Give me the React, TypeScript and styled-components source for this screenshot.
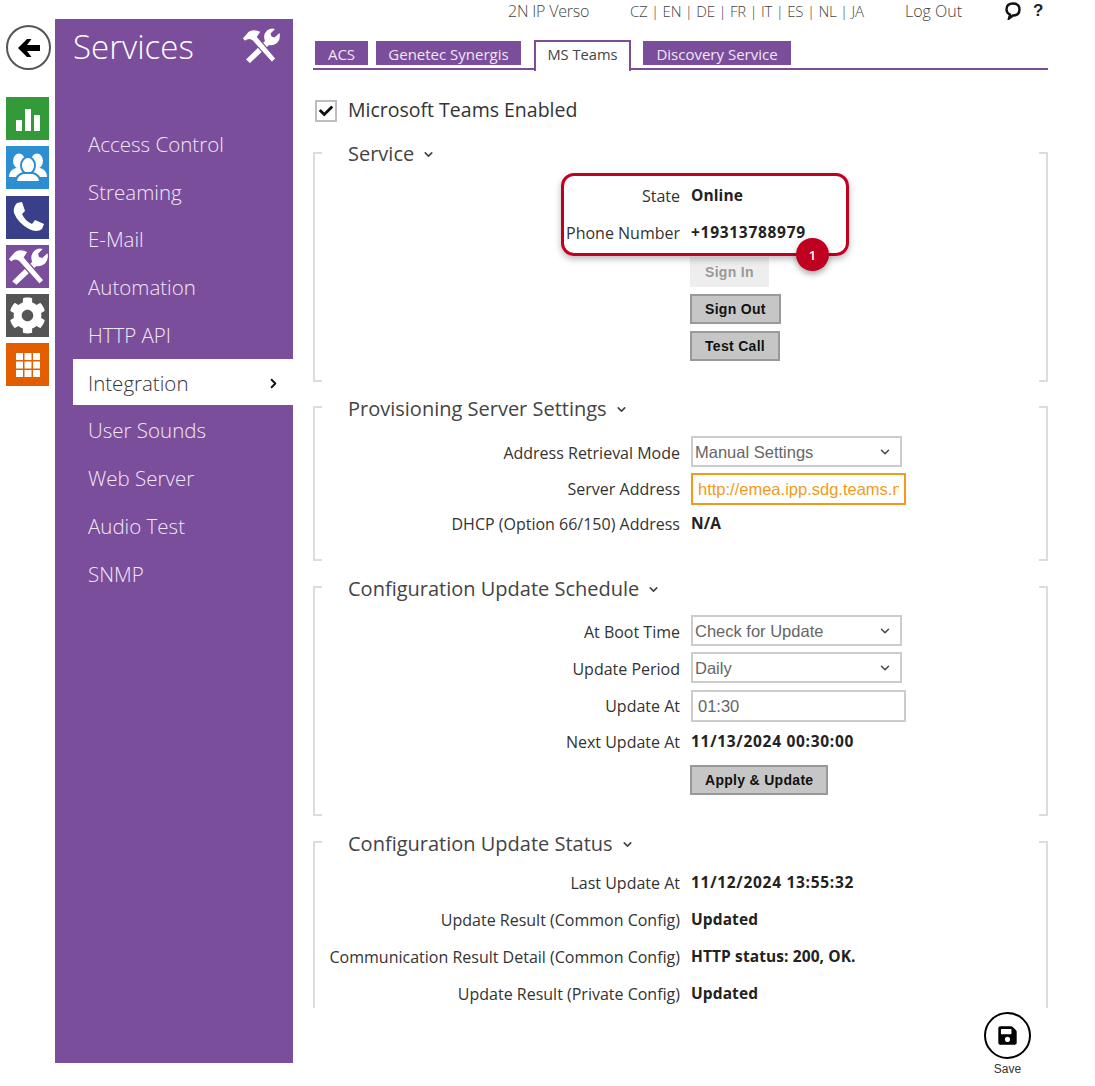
import React from "react";
import styled, { createGlobalStyle } from "styled-components";
import { FaCheck, FaCog, FaSave } from "react-icons/fa";
import { FiChevronDown, FiChevronRight } from "react-icons/fi";

const PURPLE = "#7b4e9c";
const UI = `"Open Sans", "Noto Sans", sans-serif`;
const ARIAL = `"Liberation Sans", Arial, sans-serif`;

const Global = createGlobalStyle`
  html, body { margin: 0; padding: 0; background: #fff; }
  body { width: 1095px; height: 1086px; overflow: hidden; font-family: ${UI}; color: #333; }
  * { box-sizing: border-box; }
`;

const Page = styled.div`
  display: flex;
  width: 1095px;
  height: 1086px;
`;

const Rail = styled.nav`
  width: 55px;
  flex: none;
  padding: 25px 0 0 6px;
  display: flex;
  flex-direction: column;
`;

const BackButton = styled.button`
  width: 45px;
  height: 45px;
  margin-bottom: 27px;
  padding: 0;
  border-radius: 50%;
  border: 2px solid #555;
  background: #fff;
  color: #000;
  display: flex;
  align-items: center;
  justify-content: center;
`;

const RailTile = styled.a<{ $bg: string }>`
  width: 43px;
  height: 43px;
  margin-bottom: 6.3px;
  background: ${(p) => p.$bg};
  color: #fff;
  display: flex;
  align-items: center;
  justify-content: center;
`;

const Sidebar = styled.aside`
  width: 238px;
  height: 1044px;
  flex: none;
  margin-top: 19px;
  background: ${PURPLE};
  color: #fff;
`;

const SideHead = styled.header`
  height: 78px;
  padding: 5px 13px 0 18px;
  display: flex;
  align-items: flex-start;
  justify-content: space-between;
  svg { margin-top: 4px; }
`;

const SideTitle = styled.h1`
  margin: 0;
  font-size: 33px;
  line-height: 46px;
  font-weight: 300;
`;

const NavList = styled.ul`
  list-style: none;
  margin: 0;
  padding: 23px 0 0 18px;
`;

const NavItem = styled.li<{ $active?: boolean }>`
  height: ${(p) => (p.$active ? 46 : 47.75)}px;
  margin: ${(p) => (p.$active ? "0 0 1.75px" : "0")};
  padding: ${(p) => (p.$active ? "3px" : "0")} 12px 0 15px;
  display: flex;
  align-items: center;
  justify-content: space-between;
  font-size: 20.5px;
  font-weight: 300;
  background: ${(p) => (p.$active ? "#fff" : "transparent")};
  color: ${(p) => (p.$active ? "#333" : "#f0e8f5")};
  svg { font-size: 15px; color: #111; stroke-width: 3; }
`;

const Main = styled.main`
  width: 735px;
  margin-left: 20px;
  flex: none;
  display: flex;
  flex-direction: column;
`;

const Viewport = styled.div`
  height: 1008px;
  overflow: hidden;
  flex: none;
`;

const TopBar = styled.div`
  height: 40px;
  padding: 0 0 18px 195px;
  display: flex;
  align-items: center;
  font-size: 16px;
  font-weight: 300;
  color: #444;
  white-space: nowrap;
`;

const Device = styled.span`
  width: 122px;
  letter-spacing: -0.2px;
`;

const Languages = styled.span`
  width: 275px;
  font-size: 15px;
  letter-spacing: -0.25px;
`;

const LogOut = styled.span`
  width: 100px;
`;

const HelpMark = styled.b`
  margin-left: 12px;
  font-family: ${ARIAL};
  font-size: 17px;
  font-weight: 700;
  color: #222;
`;

const Tabs = styled.div`
  height: 30px;
  padding-left: 2px;
  display: flex;
  align-items: flex-start;
  border-bottom: 2px solid ${PURPLE};
`;

const Tab = styled.a<{ $w: number; $gap: number }>`
  width: ${(p) => p.$w}px;
  height: 24px;
  margin: 1px ${(p) => p.$gap}px 0 0;
  background: ${PURPLE};
  color: #efe7f4;
  font-size: 15px;
  font-weight: 400;
  line-height: 26px;
  text-align: center;
  white-space: nowrap;
`;

const ActiveTab = styled.a`
  width: 97px;
  height: 31px;
  margin: 0 12px 0 0;
  background: #fff;
  color: #444;
  border: 2px solid ${PURPLE};
  border-bottom: 0;
  font-size: 14.7px;
  line-height: 24px;
  text-align: center;
  white-space: nowrap;
`;

const EnableRow = styled.label`
  height: 22px;
  margin: 30px 0 30px 2px;
  display: flex;
  align-items: center;
  gap: 11px;
`;

const EnableText = styled.span`
  margin-top: -3px;
  font-size: 19.5px;
  color: #333;
`;

const CheckBox = styled.span`
  width: 22px;
  height: 22px;
  border: 2px solid #bdbdbd;
  display: flex;
  align-items: center;
  justify-content: center;
  color: #111;
  font-size: 14px;
`;

const Section = styled.section<{ $open?: boolean; $gap?: number }>`
  position: relative;
  display: flow-root;
  margin-bottom: ${(p) => p.$gap ?? 25}px;
  padding-bottom: ${(p) => (p.$open ? 0 : 19.5)}px;
  &::before, &::after {
    content: "";
    position: absolute;
    top: 0;
    bottom: 0;
    width: 7px;
    border: 2px solid #ddd;
    ${(p) => (p.$open ? "border-bottom: 0;" : "")}
  }
  &::before { left: 0; border-right: 0; }
  &::after { right: 0; border-left: 0; }
`;

const SectionHead = styled.h2<{ $top: number; $below: number }>`
  margin: ${(p) => p.$top}px 0 ${(p) => p.$below}px 35px;
  height: 26px;
  display: flex;
  align-items: center;
  gap: 8px;
  font-size: 20px;
  line-height: 26px;
  font-weight: 400;
  color: #444;
  svg { font-size: 13px; stroke-width: 3; }
`;

const Row = styled.div<{ $h?: number }>`
  height: ${(p) => p.$h ?? 37}px;
  display: grid;
  grid-template-columns: 367px 1fr;
  column-gap: 11px;
  align-items: center;
`;

const Label = styled.span`
  font-size: 16px;
  text-align: right;
  white-space: nowrap;
  color: #333;
`;

const Value = styled.span<{ $num?: boolean }>`
  margin-top: -2px;
  font-size: 15.5px;
  font-weight: 700;
  letter-spacing: ${(p) => (p.$num ? 0.7 : 0.1)}px;
  color: #222;
  white-space: nowrap;
`;

const Button = styled.button<{ $disabled?: boolean }>`
  justify-self: start;
  height: 30px;
  margin: 4px 0 0 -1px;
  padding: 0 13px;
  font-family: ${ARIAL};
  font-size: 14px;
  font-weight: 700;
  letter-spacing: 0.3px;
  background: ${(p) => (p.$disabled ? "#eee" : "#c6c6c6")};
  color: ${(p) => (p.$disabled ? "#999" : "#111")};
  border: 2px solid ${(p) => (p.$disabled ? "#eee" : "#999")};
`;

const Select = styled.div`
  width: 211px;
  height: 31px;
  margin-top: -3px;
  padding: 1px 8px 0 2px;
  display: flex;
  align-items: center;
  justify-content: space-between;
  border: 2px solid #ccc;
  font-family: ${ARIAL};
  font-size: 16.5px;
  color: #666;
  svg { font-size: 14px; color: #444; stroke-width: 2.5; }
`;

const TextInput = styled.input<{ $focus?: boolean }>`
  width: 215px;
  height: 32px;
  padding: 0 5px;
  border: 2px solid ${(p) => (p.$focus ? "#f39a1d" : "#ccc")};
  font-family: ${ARIAL};
  font-size: 16.5px;
  color: ${(p) => (p.$focus ? "#f39a1d" : "#666")};
  outline: none;
  background: #fff;
`;

const Callout = styled.div`
  position: absolute;
  left: 248px;
  top: 21px;
  width: 288px;
  height: 83px;
  border: 3px solid #c00020;
  border-radius: 13px;
  box-shadow: 0 3px 7px rgba(0, 0, 0, 0.28);
  pointer-events: none;
`;

const CalloutBadge = styled.span`
  position: absolute;
  right: 17px;
  bottom: -18px;
  width: 33px;
  height: 33px;
  border-radius: 50%;
  background: #c00020;
  color: #fff;
  font-size: 13px;
  font-weight: 600;
  display: flex;
  align-items: center;
  justify-content: center;
  box-shadow: 0 3px 6px rgba(0, 0, 0, 0.35);
`;

const Footer = styled.div`
  padding: 4px 17px 0 0;
  display: flex;
  justify-content: flex-end;
`;

const SaveAction = styled.div`
  width: 47px;
  display: flex;
  flex-direction: column;
  align-items: center;
  font-family: ${ARIAL};
  font-size: 12px;
  color: #333;
`;

const SaveCircle = styled.button`
  width: 47px;
  height: 47px;
  padding: 0;
  margin-bottom: 3px;
  border-radius: 50%;
  border: 2px solid #000;
  background: #fff;
  color: #000;
  font-size: 21px;
  display: flex;
  align-items: center;
  justify-content: center;
`;

const Tools = ({ size, bg }: { size: number; bg: string }) => (
  <svg width={size} height={size * 0.9} viewBox="0 0 39 35" fill="#fff">
    <path d="M5 31.5 L24 13 Q21.5 7 26 2.5 Q30 -0.5 34 1 L29.5 5.5 L30.5 8.5 L33.5 9.5 L38.5 5 Q40 11 36 15 Q32 18 28 17 L9 35 Z" />
    <path d="M1 10.5 L4 13.5 Q8 10 11.5 13 L31 34.5 L35 30.5 L16.5 9 L20 3.5 Q12 -0.5 7 3.5 Z" stroke={bg} strokeWidth="1.2" />
  </svg>
);

const BackArrow = () => (
  <svg width="22" height="18" viewBox="0 0 22 18" fill="#000">
    <path d="M0 9 L9 0 H13.5 L9 6 H22 V12 H9 L13.5 18 H9 Z" />
  </svg>
);

const Bars = () => (
  <svg width="26" height="26" viewBox="0 0 26 26" fill="#fff">
    <rect x="1" y="14" width="6" height="11" />
    <rect x="10" y="3" width="6" height="22" />
    <rect x="19" y="9" width="6" height="16" />
  </svg>
);

const People = () => (
  <svg width="40" height="30" viewBox="0 0 40 30" fill="#fff">
    <ellipse cx="11" cy="8" rx="6" ry="7.5" />
    <path d="M1 24 Q1 17 8 15 L14 15 L16 24 Z" />
    <ellipse cx="29" cy="8" rx="6" ry="7.5" />
    <path d="M39 24 Q39 17 32 15 L26 15 L24 24 Z" />
    <ellipse cx="20" cy="12.5" rx="7" ry="8.5" stroke="#2d8fd1" strokeWidth="2" />
    <path d="M8 29 Q8 22 15 20 L25 20 Q32 22 32 29 Z" stroke="#2d8fd1" strokeWidth="2" />
  </svg>
);

const Handset = () => (
  <svg width="32" height="30" viewBox="0 0 32 30" fill="#fff">
    <path d="M5 1 L10 0 L13 9 L10 12 Q13 19 20 22 L23 18 L32 22 L30 27 Q25 31 17 27 Q6 21 2 11 Q1 5 5 1 Z" />
  </svg>
);

const Grid = () => (
  <svg width="24" height="24" viewBox="0 0 24 24" fill="#fff">
    {[0, 8.5, 17].flatMap((y) =>
      [0, 8.5, 17].map((x) => <rect key={`${x}-${y}`} x={x} y={y} width="7" height="7" />)
    )}
  </svg>
);

const Bubble = () => (
  <svg width="16" height="18" viewBox="0 0 16 18" fill="none" stroke="#111" strokeWidth="2.4">
    <path d="M4 16.5 L5 12.6 Q1.5 11 1.5 7.5 Q1.5 1.5 8 1.5 Q14.5 1.5 14.5 7.5 Q14.5 13.5 8 13.5 Z" />
  </svg>
);

const nav = ["Access Control", "Streaming", "E-Mail", "Automation", "HTTP API", "Integration", "User Sounds", "Web Server", "Audio Test", "SNMP"];

const Field = ({ label, h, children }: { label: string; h?: number; children: React.ReactNode }) => (
  <Row $h={h}>
    <Label>{label}</Label>
    {children}
  </Row>
);

export default function App() {
  return (
    <Page>
      <Global />
      <Rail>
        <BackButton aria-label="Back"><BackArrow /></BackButton>
        <RailTile $bg="#339a3a"><Bars /></RailTile>
        <RailTile $bg="#2d8fd1"><People /></RailTile>
        <RailTile $bg="#3a3f8a"><Handset /></RailTile>
        <RailTile $bg={PURPLE}><Tools size={41} bg={PURPLE} /></RailTile>
        <RailTile $bg="#555"><FaCog size={37} /></RailTile>
        <RailTile $bg="#e35e00"><Grid /></RailTile>
      </Rail>
      <Sidebar>
        <SideHead>
          <SideTitle>Services</SideTitle>
          <Tools size={39} bg={PURPLE} />
        </SideHead>
        <NavList>
          {nav.map((n) => (
            <NavItem key={n} $active={n === "Integration"}>
              {n}
              {n === "Integration" && <FiChevronRight />}
            </NavItem>
          ))}
        </NavList>
      </Sidebar>
      <Main>
        <Viewport>
          <TopBar>
            <Device>2N IP Verso</Device>
            <Languages>CZ | EN | DE | FR | IT | ES | NL | JA</Languages>
            <LogOut>Log Out</LogOut>
            <Bubble />
            <HelpMark>?</HelpMark>
          </TopBar>
          <Tabs>
            <Tab $w={53} $gap={8}>ACS</Tab>
            <Tab $w={145} $gap={13}>Genetec Synergis</Tab>
            <ActiveTab>MS Teams</ActiveTab>
            <Tab $w={148} $gap={0}>Discovery Service</Tab>
          </Tabs>
          <EnableRow>
            <CheckBox><FaCheck /></CheckBox>
            <EnableText>Microsoft Teams Enabled</EnableText>
          </EnableRow>

          <Section $gap={24}>
            <SectionHead $top={-11} $below={10.5}>Service <FiChevronDown /></SectionHead>
            <Field label="State"><Value>Online</Value></Field>
            <Field label="Phone Number"><Value $num>+19313788979</Value></Field>
            <Field label=""><Button $disabled>Sign In</Button></Field>
            <Field label=""><Button>Sign Out</Button></Field>
            <Field label=""><Button>Test Call</Button></Field>
            <Callout><CalloutBadge>1</CalloutBadge></Callout>
          </Section>

          <Section>
            <SectionHead $top={-10} $below={12.5}>Provisioning Server Settings <FiChevronDown /></SectionHead>
            <Field label="Address Retrieval Mode"><Select>Manual Settings <FiChevronDown /></Select></Field>
            <Field label="Server Address" h={35}><TextInput $focus readOnly value="http://emea.ipp.sdg.teams.net" /></Field>
            <Field label="DHCP (Option 66/150) Address" h={35}><Value>N/A</Value></Field>
          </Section>

          <Section>
            <SectionHead $top={-10} $below={11.5}>Configuration Update Schedule <FiChevronDown /></SectionHead>
            <Field label="At Boot Time"><Select>Check for Update <FiChevronDown /></Select></Field>
            <Field label="Update Period"><Select>Daily <FiChevronDown /></Select></Field>
            <Field label="Update At"><TextInput readOnly value="01:30" /></Field>
            <Field label="Next Update At" h={35}><Value $num>11/13/2024 00:30:00</Value></Field>
            <Field label=""><Button>Apply &amp; Update</Button></Field>
          </Section>

          <Section $open $gap={0}>
            <SectionHead $top={-10} $below={7.5}>Configuration Update Status <FiChevronDown /></SectionHead>
            <Field label="Last Update At"><Value $num>11/12/2024 13:55:32</Value></Field>
            <Field label="Update Result (Common Config)"><Value>Updated</Value></Field>
            <Field label="Communication Result Detail (Common Config)"><Value>HTTP status: 200, OK.</Value></Field>
            <Field label="Update Result (Private Config)"><Value>Updated</Value></Field>
          </Section>
        </Viewport>
        <Footer>
          <SaveAction>
            <SaveCircle aria-label="Save"><FaSave /></SaveCircle>
            Save
          </SaveAction>
        </Footer>
      </Main>
    </Page>
  );
}
